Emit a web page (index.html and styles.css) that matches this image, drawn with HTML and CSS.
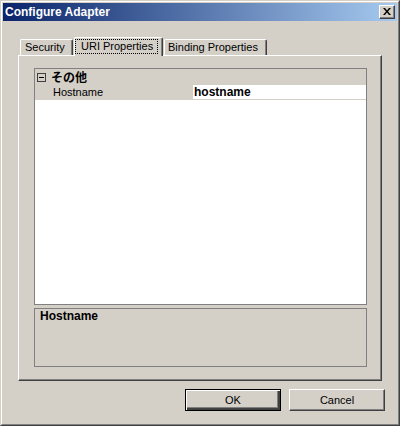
FILE: index.html
```html
<!DOCTYPE html>
<html>
<head>
<meta charset="utf-8">
<link rel="stylesheet" href="styles.css">
</head>
<body>
<div class="window">
  <div class="frame">
    <div class="titlebar">
      <span class="title">Configure Adapter</span>
      <span class="close"><svg width="8" height="7" viewBox="0 0 8 7"><path d="M0 0h2l2 2.5L6 0h2L5 3.5 8 7H6L4 4.5 2 7H0l3-3.5z" fill="#000"/></svg></span>
    </div>
    <div class="content">
      <div class="tabs">
        <div class="tab tab-sec">Security</div>
        <div class="tab tab-sel"><span class="focus">URI Properties</span></div>
        <div class="tab tab-bind">Binding Properties</div>
      </div>
      <div class="panel">
        <div class="grid">
          <div class="cat-row">
            <svg class="toggle" width="9" height="9" viewBox="0 0 9 9"><rect x="0.5" y="0.5" width="8" height="8" fill="none" stroke="#404040"/><path d="M2 4.5h5" stroke="#000"/></svg>
            <span class="cat-name">その他</span>
          </div>
          <div class="prop-row">
            <div class="prop-label">Hostname</div>
            <div class="prop-value">hostname</div>
          </div>
          <div class="grid-empty"></div>
        </div>
        <div class="desc">
          <div class="desc-title">Hostname</div>
        </div>
      </div>
      <div class="buttons">
        <div class="btn btn-default"><span>OK</span></div>
        <div class="btn btn-last"><span>Cancel</span></div>
      </div>
    </div>
  </div>
</div>
</body>
</html>
```
FILE: styles.css
```css
html, body {
  margin: 0;
  padding: 0;
  background: #d4d0c8;
}
body {
  font-family: "Liberation Sans", Arial, sans-serif;
  font-size: 11px;
  color: #000;
}
.window {
  width: 400px;
  height: 426px;
  box-sizing: border-box;
  border: 1px solid;
  border-color: #d4d0c8 #404040 #404040 #d4d0c8;
  background: #d4d0c8;
}
.frame {
  height: 100%;
  box-sizing: border-box;
  border: 1px solid;
  border-color: #fff #808080 #808080 #fff;
  padding: 1px;
  display: flex;
  flex-direction: column;
}
.titlebar {
  height: 18px;
  background: linear-gradient(to right, #0a246a, #a6caf0);
  display: flex;
  align-items: center;
  justify-content: space-between;
  padding: 0 2px 0 2px;
}
.title {
  color: #fff;
  font-weight: bold;
  font-size: 12px;
  line-height: 18px;
}
.close {
  width: 16px;
  height: 14px;
  box-sizing: border-box;
  background: #d4d0c8;
  border: 1px solid;
  border-color: #fff #404040 #404040 #fff;
  box-shadow: inset -1px -1px 0 #808080;
  display: flex;
  align-items: center;
  justify-content: center;
  padding: 0 1px 1px 0;
}
.close svg { display: block; }
.content {
  flex: 1;
  padding: 16px 15px 12px 15px;
  display: flex;
  flex-direction: column;
}
.tabs {
  height: 18px;
  display: flex;
  align-items: flex-end;
  padding-left: 2px;
}
.tab {
  box-sizing: border-box;
  height: 16px;
  border-top: 1px solid #fff;
  border-left: 1px solid #fff;
  border-right: 1px solid #404040;
  box-shadow: inset -1px 0 0 #808080;
  border-radius: 2px 2px 0 0;
  line-height: 14px;
  white-space: nowrap;
  background: #d4d0c8;
}
.tab-sec {
  width: 53px;
  padding-left: 4px;
}
.tab-sel {
  width: 89px;
  height: 19px;
  margin-left: 1px;
  margin-bottom: -1px;
  padding-top: 1px;
  position: relative;
  z-index: 1;
}
.focus {
  display: inline-block;
  padding: 0 4px 0 5px;
  line-height: 13px;
  border: 1px dotted #000;
}
.tab-bind {
  width: 103px;
  margin-left: 1px;
  padding-left: 3px;
}
.panel {
  height: 326px;
  box-sizing: border-box;
  border-top: 1px solid #fff;
  border-left: 1px solid #fff;
  border-right: 1px solid #404040;
  border-bottom: 1px solid #404040;
  box-shadow: inset -1px -1px 0 #808080;
  padding: 12px 14px 13px 15px;
  display: flex;
  flex-direction: column;
  gap: 3px;
}
.grid {
  height: 237px;
  box-sizing: border-box;
  border: 1px solid #808080;
  display: flex;
  flex-direction: column;
  background: #fff;
}
.cat-row {
  height: 16px;
  background: #d4d0c8;
  display: flex;
  align-items: center;
  padding-left: 2px;
}
.toggle {
  display: block;
}
.cat-name {
  margin-left: 5px;
  font-family: "Noto Sans CJK JP", sans-serif;
  font-weight: bold;
  font-size: 12px;
  line-height: 16px;
}
.prop-row {
  height: 15px;
  box-sizing: border-box;
  display: flex;
  border-bottom: 1px solid #d4d0c8;
}
.prop-label {
  width: 158px;
  background: #d4d0c8;
  padding-left: 18px;
  box-sizing: border-box;
  line-height: 14px;
}
.prop-value {
  flex: 1;
  background: #fff;
  padding-left: 1px;
  font-weight: bold;
  font-size: 12px;
  line-height: 14px;
}
.grid-empty {
  flex: 1;
  background: #fff;
}
.desc {
  height: 59px;
  box-sizing: border-box;
  border: 1px solid #808080;
  padding: 0 5px;
}
.desc-title {
  font-weight: bold;
  font-size: 12px;
  line-height: 14px;
}
.buttons {
  margin-top: 8px;
  display: flex;
  justify-content: flex-end;
  gap: 8px;
}
.btn {
  width: 96px;
  height: 22px;
  box-sizing: border-box;
  border: 1px solid;
  border-color: #fff #404040 #404040 #fff;
  box-shadow: inset -1px -1px 0 #808080;
  display: flex;
  align-items: center;
  justify-content: center;
  line-height: 14px;
}
.btn-default {
  border: 1px solid #000;
  box-shadow: inset 1px 1px 0 #fff, inset -2px -2px 0 #404040, inset -3px -3px 0 #808080;
}
.btn-last {
  margin-right: -3px;
}
```
